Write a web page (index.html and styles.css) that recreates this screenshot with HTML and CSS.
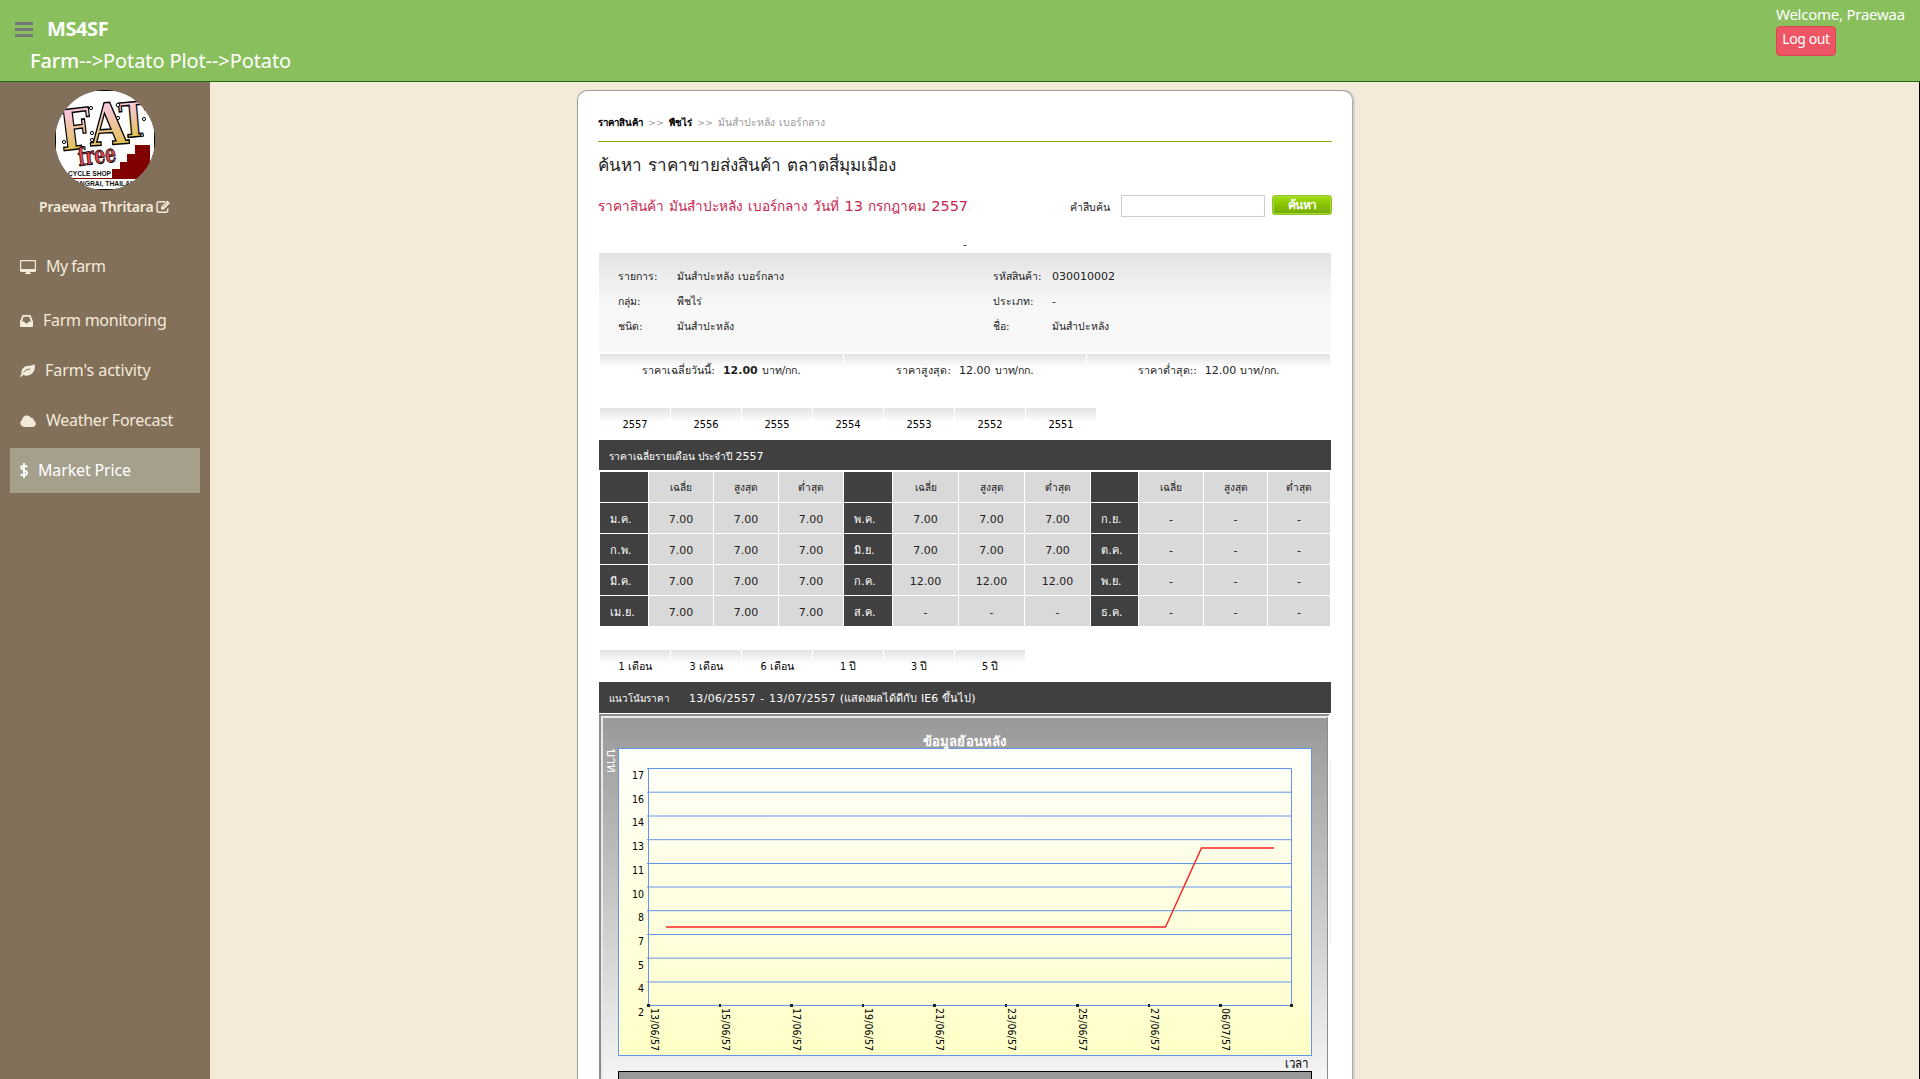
FILE: index.html
```html
<!DOCTYPE html>
<html lang="th">
<head>
<meta charset="utf-8">
<title>MS4SF</title>
<link rel="stylesheet" href="styles.css">
</head>
<body>
<header class="topbar">
  <div class="brand-area">
    <div class="brand"><span class="burger"><i></i><i></i><i></i></span><b class="brand-name">MS4SF</b></div>
    <div class="path"><b>Farm</b>--&gt;Potato Plot--&gt;Potato</div>
  </div>
  <div class="account"><div class="welcome">Welcome, Praewaa</div><button class="logout">Log out</button></div>
</header>
<div class="body">
  <aside class="sidebar">
    <svg class="avatar" viewBox="0 0 100 100">
      <defs>
        <clipPath id="round"><circle cx="50" cy="50" r="50"/></clipPath>
        <linearGradient id="fat" x1="0" y1="0" x2="0" y2="1"><stop offset=".25" stop-color="#f7c6d8"/><stop offset=".8" stop-color="#e2c254"/></linearGradient>
      </defs>
      <g clip-path="url(#round)">
        <rect width="100" height="100" fill="#000"/><rect x="1" y="1" width="98" height="98" fill="#fff"/>
        <g class="fat" fill="url(#fat)">
          <text transform="translate(7 61) rotate(-7)" font-size="56" textLength="32" lengthAdjust="spacingAndGlyphs">F</text>
          <text transform="translate(36 56) rotate(-4)" font-size="58" textLength="38" lengthAdjust="spacingAndGlyphs">A</text>
          <text transform="translate(66 48) rotate(-5)" font-size="48" textLength="29" lengthAdjust="spacingAndGlyphs">T</text>
        </g>
        <g fill="#fff" stroke="#000"><circle cx="36" cy="18" r="1.6"/><circle cx="9" cy="52" r="1.6"/><circle cx="37" cy="43" r="1.6"/><circle cx="37" cy="50" r="1.6"/><circle cx="63" cy="15" r="1.8"/><circle cx="63" cy="28" r="1.6"/><circle cx="89" cy="29" r="1.6"/><circle cx="87" cy="45" r="1.4"/></g>
        <path d="M57 88V79h8v-7h7v-8h8v-9h15v33z" fill="#800000"/>
        <path d="M0 88.500h100" stroke="#800000"/>
        <text class="free" transform="translate(24 76) rotate(-7)" textLength="38" lengthAdjust="spacingAndGlyphs">free</text>
        <text class="shop" x="13" y="86" textLength="43" lengthAdjust="spacingAndGlyphs">CYCLE SHOP</text>
        <text class="shop" x="20" y="96" textLength="60" lengthAdjust="spacingAndGlyphs">ANGRAI, THAILAN</text>
      </g>
    </svg>
    <div class="user"><b>Praewaa Thritara</b>
      <svg width="15" height="14" viewBox="0 0 15 14"><path d="M9 1.700H3A2 2 0 0 0 1 3.700v6.600a2 2 0 0 0 2 2h6.700a2 2 0 0 0 2-2V8.500" fill="none" stroke="#f4eada" stroke-width="1.500"/><path d="M5 9.500V6.800L11.200.6l2.700 2.700-6.200 6.200z" fill="#f4eada"/><path d="M6.500 7.300 11 2.800" stroke="#82705b" stroke-width=".7"/></svg>
    </div>
    <nav class="menu">
      <a class="item first"><svg width="16" height="14" viewBox="0 0 16 14"><path fill-rule="evenodd" d="M1 0h14q1 0 1 1v10q0 1-1 1h-5v1h1v1H5v-1h1v-1H1q-1 0-1-1V1q0-1 1-1zm.2 1.200v7.800h13.600V1.200z"/></svg><span>My farm</span></a>
      <a class="item"><svg width="13" height="12" viewBox="0 0 13 12"><path fill-rule="evenodd" d="M2.500 0h8L13 6.500V11q0 1-1 1H1q-1 0-1-1V6.500zM3.700 1.800 2 6.500h2.300l.9 1.800h2.600l.9-1.800H11L9.300 1.800z"/></svg><span>Farm monitoring</span></a>
      <a class="item activity"><svg width="15" height="13" viewBox="0 0 15 13"><path d="M14.500 0C15.500 3.500 14.500 8 11 10.300 8.500 12 5.500 12 3.500 10.800L1 13 0 12.300c.2-1 1.500-1.500 1.700-2.300C.7 6.500 3 2.800 7 2c3-.6 5.500 0 7.500-2z"/><path d="M3.600 8.500C5 6.500 7 5 10.300 5" fill="none" stroke="#82705b"/></svg><span>Farm's activity</span></a>
      <a class="item"><svg width="16" height="12" viewBox="0 0 16 12"><path d="M4 12a4 4 0 0 1-1.700-7.400A4.700 4.700 0 0 1 11 2.700 2.500 2.500 0 0 1 13.600 5.600 3.300 3.300 0 0 1 13 12z"/></svg><span>Weather Forecast</span></a>
      <a class="item active"><svg width="8" height="15" viewBox="0 0 8 15"><path d="M4 0v15M7.300 4C6 2.600 1.400 2 1.200 4.700 1.200 7.500 7 6.800 7 10 6.800 12.900 2.200 13 .6 11.200" fill="none" stroke="#fff" stroke-width="1.900"/></svg><span>Market Price</span></a>
    </nav>
  </aside>
  <main class="main">
    <section class="card">
      <div class="crumbs"><b>ราคาสินค้า</b><i>&gt;&gt;</i><b>พืชไร่</b><i>&gt;&gt;</i><span>มันสำปะหลัง เบอร์กลาง</span></div>
      <h1 class="title">ค้นหา ราคาขายส่งสินค้า ตลาดสี่มุมเมือง</h1>
      <div class="searchrow">
        <h2 class="today">ราคาสินค้า มันสำปะหลัง เบอร์กลาง วันที่ <span>13</span> กรกฎาคม <span>2557</span></h2>
        <label class="keyword">คำสืบค้น</label><input class="field"><button class="find">ค้นหา</button>
      </div>
      <div class="dash">-</div>
      <div class="details">
        <span>รายการ:</span><span>มันสำปะหลัง เบอร์กลาง</span><span>รหัสสินค้า:</span><span class="num">030010002</span>
        <span>กลุ่ม:</span><span>พืชไร่</span><span>ประเภท:</span><span>-</span>
        <span>ชนิด:</span><span>มันสำปะหลัง</span><span>ชื่อ:</span><span>มันสำปะหลัง</span>
      </div>
      <div class="prices">
        <div><span>ราคาเฉลี่ยวันนี้:</span><b>12.00</b><span>บาท/กก.</span></div>
        <div><span>ราคาสูงสุด:</span><i>12.00</i><span>บาท/กก.</span></div>
        <div><span>ราคาต่ำสุด::</span><i>12.00</i><span>บาท/กก.</span></div>
      </div>
      <div class="tabs years"><a>2557</a><a>2556</a><a>2555</a><a>2554</a><a>2553</a><a>2552</a><a>2551</a></div>
      <div class="bar">ราคาเฉลี่ยรายเดือน ประจำปี <span class="num">2557</span></div>
      <div class="months">
        <b></b><span>เฉลี่ย</span><span>สูงสุด</span><span>ต่ำสุด</span><b></b><span>เฉลี่ย</span><span>สูงสุด</span><span>ต่ำสุด</span><b></b><span>เฉลี่ย</span><span>สูงสุด</span><span>ต่ำสุด</span>
        <b>ม.ค.</b><span>7.00</span><span>7.00</span><span>7.00</span><b>พ.ค.</b><span>7.00</span><span>7.00</span><span>7.00</span><b>ก.ย.</b><span>-</span><span>-</span><span>-</span>
        <b>ก.พ.</b><span>7.00</span><span>7.00</span><span>7.00</span><b>มิ.ย.</b><span>7.00</span><span>7.00</span><span>7.00</span><b>ต.ค.</b><span>-</span><span>-</span><span>-</span>
        <b>มี.ค.</b><span>7.00</span><span>7.00</span><span>7.00</span><b>ก.ค.</b><span>12.00</span><span>12.00</span><span>12.00</span><b>พ.ย.</b><span>-</span><span>-</span><span>-</span>
        <b>เม.ย.</b><span>7.00</span><span>7.00</span><span>7.00</span><b>ส.ค.</b><span>-</span><span>-</span><span>-</span><b>ธ.ค.</b><span>-</span><span>-</span><span>-</span>
      </div>
      <div class="tabs ranges"><a>1 เดือน</a><a>3 เดือน</a><a>6 เดือน</a><a>1 ปี</a><a>3 ปี</a><a>5 ปี</a></div>
      <div class="bar trend"><span>แนวโน้มราคา</span><span><span class="period">13/06/2557 - 13/07/2557</span> (แสดงผลได้ดีกับ IE6 ขึ้นไป)</span></div>
      <svg class="chart" width="733" height="365" viewBox="599 714 733 365">
        <defs>
          <linearGradient id="frame" x1="0" y1="0" x2="0" y2="1"><stop offset="0" stop-color="#999"/><stop offset="1" stop-color="#f5f5f5"/></linearGradient>
          <linearGradient id="paper" x1="0" y1="0" x2="0" y2="1"><stop offset="0" stop-color="#fffffa"/><stop offset="1" stop-color="#ffffc8"/></linearGradient>
        </defs>
        <path d="M599 714h731l-2 2H601v363h-2z" fill="#8c8c8c"/>
        <path d="M602 1079V717h726" fill="none" stroke="#d3d3d3"/>
        <rect x="603" y="718" width="724" height="361" fill="url(#frame)"/>
        <path d="M1327.500 717v362" stroke="#8c8c8c"/>
        <path d="M1330.500 760v184" stroke="#eee"/>
        <rect x="618.500" y="748.500" width="693" height="307" fill="url(#paper)" stroke="#6495ed"/>
        <g stroke="#6495ed" fill="none">
          <path d="M647 792.200h644M647 816h644M647 839.700h644M647 863.500h644M647 887h644M647 910.700h644M647 934.500h644M647 958.100h644M647 982h644"/>
          <path d="M647 768.500h644.500V1005.500H647M648.500 768v238"/>
        </g>
        <g fill="#222"><path d="M647 1004h3v3h-3zM719 1004h2v3h-2zM790 1004h3v3h-3zM862 1004h2v3h-2zM933 1004h3v3h-3zM1005 1004h2v3h-2zM1076 1004h3v3h-3zM1148 1004h2v3h-2zM1219 1004h3v3h-3zM1290 1004h3v3h-3z"/></g>
        <path d="M666 927h499.500L1201.500 848H1274" fill="none" stroke="#f22" stroke-width="1.400"/>
        <g class="ylab"><text x="644" y="779">17</text><text x="644" y="803">16</text><text x="644" y="826">14</text><text x="644" y="850">13</text><text x="644" y="874">11</text><text x="644" y="898">10</text><text x="644" y="921">8</text><text x="644" y="945">7</text><text x="644" y="969">5</text><text x="644" y="992">4</text><text x="644" y="1016">2</text></g>
        <g class="xlab">
          <text transform="translate(651 1008) rotate(90)" textLength="43">13/06/57</text><text transform="translate(722 1008) rotate(90)" textLength="43">15/06/57</text><text transform="translate(793 1008) rotate(90)" textLength="43">17/06/57</text><text transform="translate(865 1008) rotate(90)" textLength="43">19/06/57</text><text transform="translate(936 1008) rotate(90)" textLength="43">21/06/57</text><text transform="translate(1008 1008) rotate(90)" textLength="43">23/06/57</text><text transform="translate(1079 1008) rotate(90)" textLength="43">25/06/57</text><text transform="translate(1151 1008) rotate(90)" textLength="43">27/06/57</text><text transform="translate(1222 1008) rotate(90)" textLength="43">06/07/57</text>
        </g>
        <text class="ctitle" x="923" y="746" textLength="83" lengthAdjust="spacingAndGlyphs">ข้อมูลย้อนหลัง</text>
        <text class="caxis" transform="translate(607 749) rotate(90)" textLength="24" lengthAdjust="spacingAndGlyphs">บาท</text>
        <text class="ctime" x="1285" y="1068" textLength="23" lengthAdjust="spacingAndGlyphs">เวลา</text>
        <rect x="618.500" y="1071.500" width="693" height="30" fill="#999" stroke="#000"/>
      </svg>
    </section>
  </main>
</div>
</body>
</html>
```

FILE: styles.css
```css
* { box-sizing: border-box; }
body { margin: 0; height: 1079px; overflow: hidden; background: #f4eada; font-family: "DejaVu Sans", sans-serif; font-size: 10.500px; color: #222; }
.topbar { height: 82px; background: #8abf5d; border-bottom: 1px solid #1c6a12; display: flex; justify-content: space-between; color: #fff; font-family: "Noto Sans", sans-serif; }
.brand-area { padding-top: 13px; }
.brand { display: flex; align-items: center; height: 32px; padding-left: 15px; gap: 14px; font-size: 20px; }
.brand-name { letter-spacing: -.4px; padding-bottom: 1px; }
.burger { display: flex; flex-direction: column; gap: 3px; width: 18px; padding-top: 1px; }
.burger i { height: 3px; background: #777; }
.path { padding-left: 30px; line-height: 32px; font-size: 20px; letter-spacing: -.1px; }
.path b { font-weight: 500; }
.account { width: 144px; padding-top: 4px; font-size: 15px; }
.welcome { line-height: 20px; white-space: nowrap; letter-spacing: -.25px; }
.logout { display: block; width: 60px; height: 30px; margin-top: 2px; padding: 0 0 5px; background: #ed5565; border: 1px solid #da4453; border-radius: 4px; color: #fff; font: 14px "Noto Sans", sans-serif; letter-spacing: -.4px; }
.body { display: flex; height: 997px; }
.sidebar { width: 210px; background: #82705b; color: #f4eada; font-family: "Noto Sans", sans-serif; padding-top: 8px; }
.avatar { display: block; width: 100px; height: 100px; margin-left: 55px; }
.fat { font-family: "DejaVu Serif", serif; font-weight: bold; stroke: #000; stroke-width: 1.5px; }
.free { font: bold 25px "DejaVu Serif", serif; fill: #e8474f; stroke: #000; stroke-width: .9px; }
.shop { font: bold 7.5px "Liberation Sans", sans-serif; fill: #111; }
.user { display: flex; align-items: center; height: 33px; margin-bottom: 1px; padding-left: 39px; gap: 4px; font-size: 14px; letter-spacing: -.15px; }
.user b { font-weight: 600; white-space: nowrap; width: 113px; }
.menu { padding: 20px 10px 0; }
.item { display: flex; align-items: center; height: 45px; margin-bottom: 5px; padding-left: 10px; gap: 10px; font-size: 16px; letter-spacing: -.27px; white-space: nowrap; }
.item span { padding-bottom: 2px; }
.item.first { margin-bottom: 9px; letter-spacing: -.5px; }
.item.activity { letter-spacing: -.05px; }
.item svg { fill: #f4eada; }
.item.active { background: #a5a08c; color: #fff; letter-spacing: -.15px; }
.main { flex: 1; padding: 8px 0 0 367px; border-right: 1px solid #000; }
.card { width: 776px; height: 989px; background: #fff; border: 1px solid #999; border-right: 1px solid #aaa; border-bottom: 0; border-radius: 10px 10px 0 0; box-shadow: 2px 0 0 #d3d3d3; padding: 0 20px; overflow: hidden; }
.crumbs { width: 734px; height: 51px; padding-top: 22px; line-height: 18px; border-bottom: 1px solid #83a812; color: #999; white-space: pre; word-spacing: 1px; }
.crumbs b { color: #000; font-size: 9.700px; }
.crumbs i { font-style: normal; margin: 0 5px 0 5px; font-size: 9.500px; }
.title { margin: 0; height: 44px; padding-top: 8px; font-size: 17px; word-spacing: .5px; line-height: 30px; font-weight: 400; white-space: nowrap; }
.searchrow { display: flex; width: 734px; height: 44px; padding-top: 9px; }
.today { margin: 0; width: 472px; line-height: 22px; font-size: 13.600px; word-spacing: .8px; font-weight: 400; color: #c7254e; white-space: nowrap; }
.today span { font-size: 14.500px; }
.keyword { width: 51px; line-height: 24px; white-space: nowrap; }
.field { width: 144px; height: 22px; border: 1px solid #ccc; padding: 0; margin-right: 7px; }
.find { width: 60px; height: 20px; padding: 0; border: 1px solid #8fc31a; border-radius: 3px; background: linear-gradient(#a2de09, #72a800); box-shadow: inset 0 0 0 1px #a9d843; color: #fff; font: bold 12px/18px "DejaVu Sans", sans-serif; letter-spacing: -.5px; }
.dash { width: 734px; height: 23px; line-height: 28px; text-align: center; }
.num { font-size: 11px; }
.details { margin-left: 1px; width: 732px; height: 99px; padding: 11px 0 0 19px; background: linear-gradient(#e3e3e3, #f7f7f7 50%); display: grid; grid-template-columns: 59px 316px 59px 1fr; grid-auto-rows: 25px; line-height: 25px; word-spacing: 1px; white-space: nowrap; }
.prices { display: grid; grid-template-columns: 243px 242px 243px; gap: 1px; margin: 2px 0 0 2px; height: 54px; }
.prices div { display: flex; align-items: baseline; justify-content: center; line-height: 33px; background: linear-gradient(#e3e3e3, #fff) 0 0 / 100% 14px no-repeat; white-space: nowrap; }
.prices i, .prices b { font-size: 11px; font-style: normal; margin: 0 4px 0 8px; }
.prices span { font-size: 10.700px; }
.tabs { display: flex; gap: 1px; margin-left: 2px; height: 32px; font-size: 11px; font-family: "DejaVu Sans Condensed", "DejaVu Sans", sans-serif; font-stretch: condensed; color: #000; }
.tabs a { width: 70px; text-align: center; line-height: 34px; background: linear-gradient(#e3e3e3, #fff) 0 0 / 100% 14px no-repeat; }
.ranges a { font-size: 10.700px; }
.bar { margin-left: 1px; width: 732px; height: 30px; background: #404040; color: #fff; padding-left: 10px; line-height: 33px; white-space: nowrap; }
.bar:not(.trend) { font-size: 10.200px; }
.months { display: grid; grid-template-columns: 48px 64px 64px 64px 48px 65px 65px 65px 47px 64px 63px 62px; grid-auto-rows: 30px; gap: 1px; margin: 2px 0 24px 2px; line-height: 34px; font-size: 11px; }
.months b { background: #404040; color: #fff; padding-left: 10px; font-weight: 400; letter-spacing: .2px; }
.months span { background: #d9d9d9; text-align: center; }
.months span:nth-child(-n+12) { font-size: 10.200px; line-height: 32px; }
.bar.trend { height: 31px; margin-bottom: 1px; display: grid; grid-template-columns: 80px 1fr; font-size: 11px; word-spacing: .5px; }
.bar.trend > span:first-child { font-size: 9.800px; }
.period { letter-spacing: .35px; }
.chart { display: block; margin-left: 1px; }
.ylab, .xlab { font: 10.500px "DejaVu Sans Condensed", sans-serif; fill: #000; }
.ylab { text-anchor: end; }
.ctitle, .caxis { font: bold 13px "DejaVu Sans", sans-serif; fill: #fff; }
.caxis { font-weight: 400; }
.ctime { font: 13px "DejaVu Sans", sans-serif; fill: #000; }
```
